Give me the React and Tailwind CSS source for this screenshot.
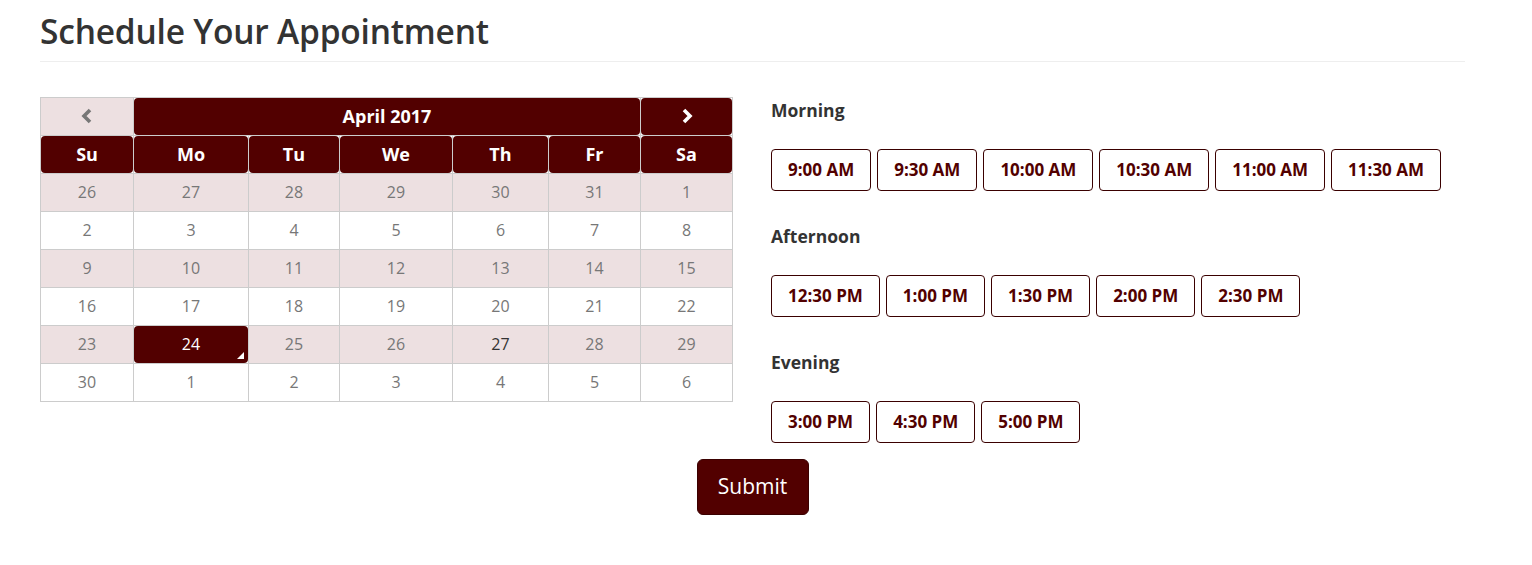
import React from 'react';

const widths = [93, 115, 91, 113, 96, 92, 92];
const dayNames = ['Su', 'Mo', 'Tu', 'We', 'Th', 'Fr', 'Sa'];
const weeks = [
    [26, 27, 28, 29, 30, 31, 1],
    [2, 3, 4, 5, 6, 7, 8],
    [9, 10, 11, 12, 13, 14, 15],
    [16, 17, 18, 19, 20, 21, 22],
    [23, 24, 25, 26, 27, 28, 29],
    [30, 1, 2, 3, 4, 5, 6],
];

const slots = [
    { label: 'Morning', times: ['9:00 AM', '9:30 AM', '10:00 AM', '10:30 AM', '11:00 AM', '11:30 AM'] },
    { label: 'Afternoon', times: ['12:30 PM', '1:00 PM', '1:30 PM', '2:00 PM', '2:30 PM'] },
    { label: 'Evening', times: ['3:00 PM', '4:30 PM', '5:00 PM'] },
];

function Chevron({ dir, color }) {
    return (
        <svg width="12" height="16" viewBox="0 0 12 16" fill="none">
            <polyline
                points={dir === 'left' ? '9,2 3,8 9,14' : '3,2 9,8 3,14'}
                stroke={color}
                strokeWidth="3.6"
                strokeLinejoin="miter"
                strokeLinecap="butt"
            />
        </svg>
    );
}

function Cell({ w, children, className = '' }) {
    return (
        <div className="h-[38px] border-r border-b border-[#cccccc] p-0" style={{ width: w }}>
            <div className={`h-full w-full flex items-center justify-center ${className}`}>{children}</div>
        </div>
    );
}

function Calendar() {
    return (
        <div className="w-[693px] self-start border-l border-t border-[#cccccc] text-[16px]">
            <div className="flex">
                <Cell w={widths[0]} className="bg-[#ede0e1]">
                    <Chevron dir="left" color="#777777" />
                </Cell>
                <div className="h-[38px] border-r border-b border-[#cccccc] w-[507px]">
                    <div className="h-full w-full flex items-center justify-center bg-[#520000] rounded-[4px] text-white font-bold text-[18px]">
                        April 2017
                    </div>
                </div>
                <Cell w={widths[6]} className="bg-[#520000] rounded-[4px]">
                    <Chevron dir="right" color="#ffffff" />
                </Cell>
            </div>
            <div className="flex">
                {dayNames.map((d, i) => (
                    <Cell key={d} w={widths[i]} className="bg-[#520000] rounded-[4px] text-white font-bold text-[18px]">
                        {d}
                    </Cell>
                ))}
            </div>
            {weeks.map((week, r) => (
                <div key={r} className="flex">
                    {week.map((day, i) => {
                        const shaded = r % 2 === 0;
                        if (r === 4 && i === 1) {
                            return (
                                <Cell key={i} w={widths[i]} className="bg-[#520000] rounded-[4px] text-white relative">
                                    {day}
                                    <span className="absolute right-[4px] bottom-[4px] w-0 h-0 border-l-[7px] border-l-transparent border-b-[7px] border-b-white" />
                                </Cell>
                            );
                        }
                        const today = r === 4 && i === 4;
                        return (
                            <Cell
                                key={i}
                                w={widths[i]}
                                className={`${shaded ? 'bg-[#ede0e1]' : 'bg-white'} ${today ? 'text-[#333333]' : 'text-[#777777]'}`}
                            >
                                {day}
                            </Cell>
                        );
                    })}
                </div>
            ))}
        </div>
    );
}

export default function App() {
    return (
        <div className="bg-white min-h-[565px] text-[#333333]" style={{ fontFamily: '"Open Sans", "Noto Sans", Arial, sans-serif' }}>
            <div className="w-[1425px] ml-[40px]">
                <h1 className="text-[33.5px] font-semibold leading-none pt-[15px] pb-[12px] border-b border-[#eeeeee] tracking-[-0.2px]">
                    Schedule Your Appointment
                </h1>
                <div className="flex mt-[35px]">
                    <Calendar />
                    <div className="ml-[38px] pt-[1px]">
                        {slots.map((s) => (
                            <div key={s.label}>
                                <h3 className="text-[17.5px] font-bold leading-[24px] mb-[27px]">{s.label}</h3>
                                <div className="flex gap-[6px] mb-[33px]">
                                    {s.times.map((t) => (
                                        <button
                                            key={t}
                                            className="h-[42px] px-[16px] border border-[#3a0000] rounded-[4px] bg-white text-[#520000] font-bold text-[17px]"
                                        >
                                            {t}
                                        </button>
                                    ))}
                                </div>
                            </div>
                        ))}
                    </div>
                </div>
                <div className="flex justify-center -mt-[17px]">
                    <button className="w-[112px] h-[56px] bg-[#520000] border border-[#3a0000] rounded-[6px] text-white text-[21px]">
                        Submit
                    </button>
                </div>
            </div>
        </div>
    );
}
